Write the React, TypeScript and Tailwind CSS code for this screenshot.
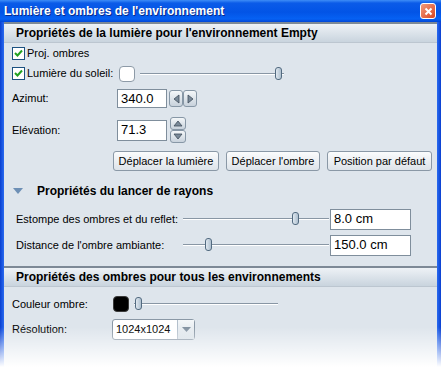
import React from "react";

const Check = () => (
  <span className="flex h-[13px] w-[13px] shrink-0 items-center justify-center border border-[#1c5180] bg-white">
    <svg width="9" height="9" viewBox="0 0 9 9">
      <path d="M1 4 L3.5 6.5 L8 1.5" stroke="#21a121" strokeWidth="2" fill="none" />
    </svg>
  </span>
);

const Swatch = ({ dark }: { dark?: boolean }) => (
  <span
    className={
      "block h-[16px] w-[16px] shrink-0 rounded-[4px] border " +
      (dark ? "border-[#3a3a3a] bg-black" : "border-[#8d9aa7] bg-white")
    }
  />
);

const Slider = ({ className, pos }: { className: string; pos: number }) => (
  <div className={"relative h-[14px] shrink-0 " + className}>
    <div className="absolute left-0 right-0 top-[6px] h-[2px] border-t border-[#8896a4] bg-white" />
    <div
      className="absolute top-0 h-[13px] w-[7px] rounded-[3px] border border-[#526a80] bg-linear-to-r from-[#dfe8f0] to-[#aebfce]"
      style={{ left: pos }}
    />
  </div>
);

const Field = ({ className, value }: { className: string; value: string }) => (
  <div className={"flex shrink-0 items-center whitespace-nowrap border border-[#7f8e9c] bg-white pl-[3px] text-[13px] " + className}>
    {value}
  </div>
);

const SpinBtn = ({ className, dir }: { className: string; dir: "l" | "r" | "u" | "d" }) => {
  const pts = {
    l: "6,1 1,5 6,9",
    r: "1,1 6,5 1,9",
    u: "1,6 5,1 9,6",
    d: "1,1 5,6 9,1",
  }[dir];
  const side = dir === "l" || dir === "r";
  return (
    <div
      className={
        "flex items-center justify-center rounded-[3px] border border-[#8797a6] bg-linear-to-b from-[#f4f7f9] to-[#c8d2dc] " +
        className
      }
    >
      <svg width={side ? 7 : 10} height={side ? 10 : 7} viewBox={side ? "0 0 7 10" : "0 0 10 7"}>
        <polygon points={pts} fill="#7a8a99" stroke="#3f4d5b" strokeWidth="0.8" />
      </svg>
    </div>
  );
};

const Button = ({ className, label }: { className: string; label: string }) => (
  <div
    className={
      "flex h-[20px] items-center justify-center whitespace-nowrap rounded-[3px] border border-[#8a98a6] bg-linear-to-b from-[#fbfcfd] to-[#dde3e9] text-[11px] " +
      className
    }
  >
    {label}
  </div>
);

const Header = ({ title }: { title: string }) => (
  <div className="flex h-[21px] items-center whitespace-nowrap border-t-2 border-b border-t-[#7d8996] border-b-[#bcc6d0] bg-linear-to-b from-[#eef2f6] to-[#c9d4de] pl-[12px] text-[12px] font-bold">
    {title}
  </div>
);

export default function App() {
  return (
    <div className="relative h-[367px] w-[441px] overflow-hidden bg-white font-['Liberation_Sans',Arial,sans-serif] text-black">
      {/* title bar */}
      <div className="flex h-[22px] items-center justify-between bg-[linear-gradient(to_bottom,#3e8df7_0%,#0b5be8_14%,#0254e6_55%,#0661f3_86%,#0046d6_100%)] pl-[4px] pr-[5px]">
        <span className="text-[12px] font-bold text-white [text-shadow:1px_1px_0_#0a2b8a]">
          Lumière et ombres de l'environnement
        </span>
        <span className="flex h-[16px] w-[16px] items-center justify-center rounded-[3px] border border-white bg-linear-to-br from-[#f29a7a] to-[#d8431c]">
          <svg width="9" height="9" viewBox="0 0 9 9">
            <path d="M1.5 1.5 L7.5 7.5 M7.5 1.5 L1.5 7.5" stroke="white" strokeWidth="2" />
          </svg>
        </span>
      </div>

      <div className="flex h-[345px]">
        <div className="w-[4px] bg-linear-to-r from-[#0a3fd0] to-[#2a6af0]" />
        <div className="flex flex-1 flex-col whitespace-nowrap bg-[#dee5ec] text-[11px]">
          <Header title="Propriétés de la lumière pour l'environnement Empty" />

          <div className="mt-[1px] flex h-[19px] items-center gap-[2px] pl-[8px]">
            <Check />
            <span>Proj. ombres</span>
          </div>

          <div className="flex h-[21px] items-center pl-[8px]">
            <div className="flex w-[107px] items-center gap-[2px]">
              <Check />
              <span>Lumière du soleil:</span>
            </div>
            <Swatch />
            <Slider className="ml-[5px] w-[144px]" pos={135} />
          </div>

          <div className="mt-[3px] flex h-[23px] items-center pl-[8px]">
            <span className="w-[105px]">Azimut:</span>
            <Field className="h-[19px] w-[50px]" value="340.0" />
            <div className="ml-[2px] flex">
              <SpinBtn className="h-[17px] w-[14px]" dir="l" />
              <SpinBtn className="h-[17px] w-[14px]" dir="r" />
            </div>
          </div>

          <div className="mt-[6px] flex h-[28px] items-center pl-[8px]">
            <span className="w-[105px]">Elévation:</span>
            <Field className="h-[21px] w-[50px]" value="71.3" />
            <div className="ml-[3px] flex flex-col">
              <SpinBtn className="h-[13px] w-[16px]" dir="u" />
              <SpinBtn className="h-[13px] w-[16px]" dir="d" />
            </div>
          </div>

          <div className="mt-[7px] flex justify-end gap-[7px] pr-[5px]">
            <Button className="w-[106px]" label="Déplacer la lumière" />
            <Button className="w-[94px]" label="Déplacer l'ombre" />
            <Button className="w-[105px]" label="Position par défaut" />
          </div>

          <div className="mt-[11px] flex h-[18px] items-center pl-[9px]">
            <svg width="10" height="7" viewBox="0 0 10 7">
              <polygon points="0,0 10,0 5,6" fill="#6d8fb5" />
            </svg>
            <span className="ml-[14px] text-[12px] font-bold">Propriétés du lancer de rayons</span>
          </div>

          <div className="mt-[8px] flex h-[22px] items-center pl-[12px]">
            <span className="w-[167px]">Estompe des ombres et du reflet:</span>
            <Slider className="w-[146px]" pos={109} />
            <Field className="ml-[1px] h-[21px] w-[81px]" value="8.0 cm" />
          </div>

          <div className="mt-[4px] flex h-[22px] items-center pl-[12px]">
            <span className="w-[167px]">Distance de l'ombre ambiante:</span>
            <Slider className="w-[146px]" pos={22} />
            <Field className="ml-[1px] h-[21px] w-[81px]" value="150.0 cm" />
          </div>

          <div className="mt-[10px]">
            <Header title="Propriétés des ombres pour tous les environnements" />
          </div>

          <div className="mt-[7px] flex h-[20px] items-center pl-[8px]">
            <span className="w-[101px]">Couleur ombre:</span>
            <Swatch dark />
            <Slider className="ml-[5px] w-[144px]" pos={1} />
          </div>

          <div className="mt-[4px] flex h-[22px] items-center pl-[8px]">
            <span className="w-[100px]">Résolution:</span>
            <div className="flex h-[21px] w-[83px] items-stretch rounded-[3px] border border-[#8a98a6] bg-white">
              <span className="flex flex-1 items-center pl-[3px] text-[11px]">1024x1024</span>
              <span className="flex w-[17px] items-center justify-center border-l border-[#b4c0cc] bg-linear-to-b from-[#f4f7f9] to-[#d8e0e7]">
                <svg width="9" height="5" viewBox="0 0 9 5">
                  <polygon points="0,0 9,0 4.5,5" fill="#8392a1" />
                </svg>
              </span>
            </div>
          </div>
        </div>
        <div className="w-[4px] bg-linear-to-r from-[#2a6af0] to-[#0a3fd0]" />
      </div>

      {/* screenshot fade-out */}
      <div className="pointer-events-none absolute bottom-0 left-0 right-0 h-[40px] bg-linear-to-b from-transparent to-white" />
    </div>
  );
}
